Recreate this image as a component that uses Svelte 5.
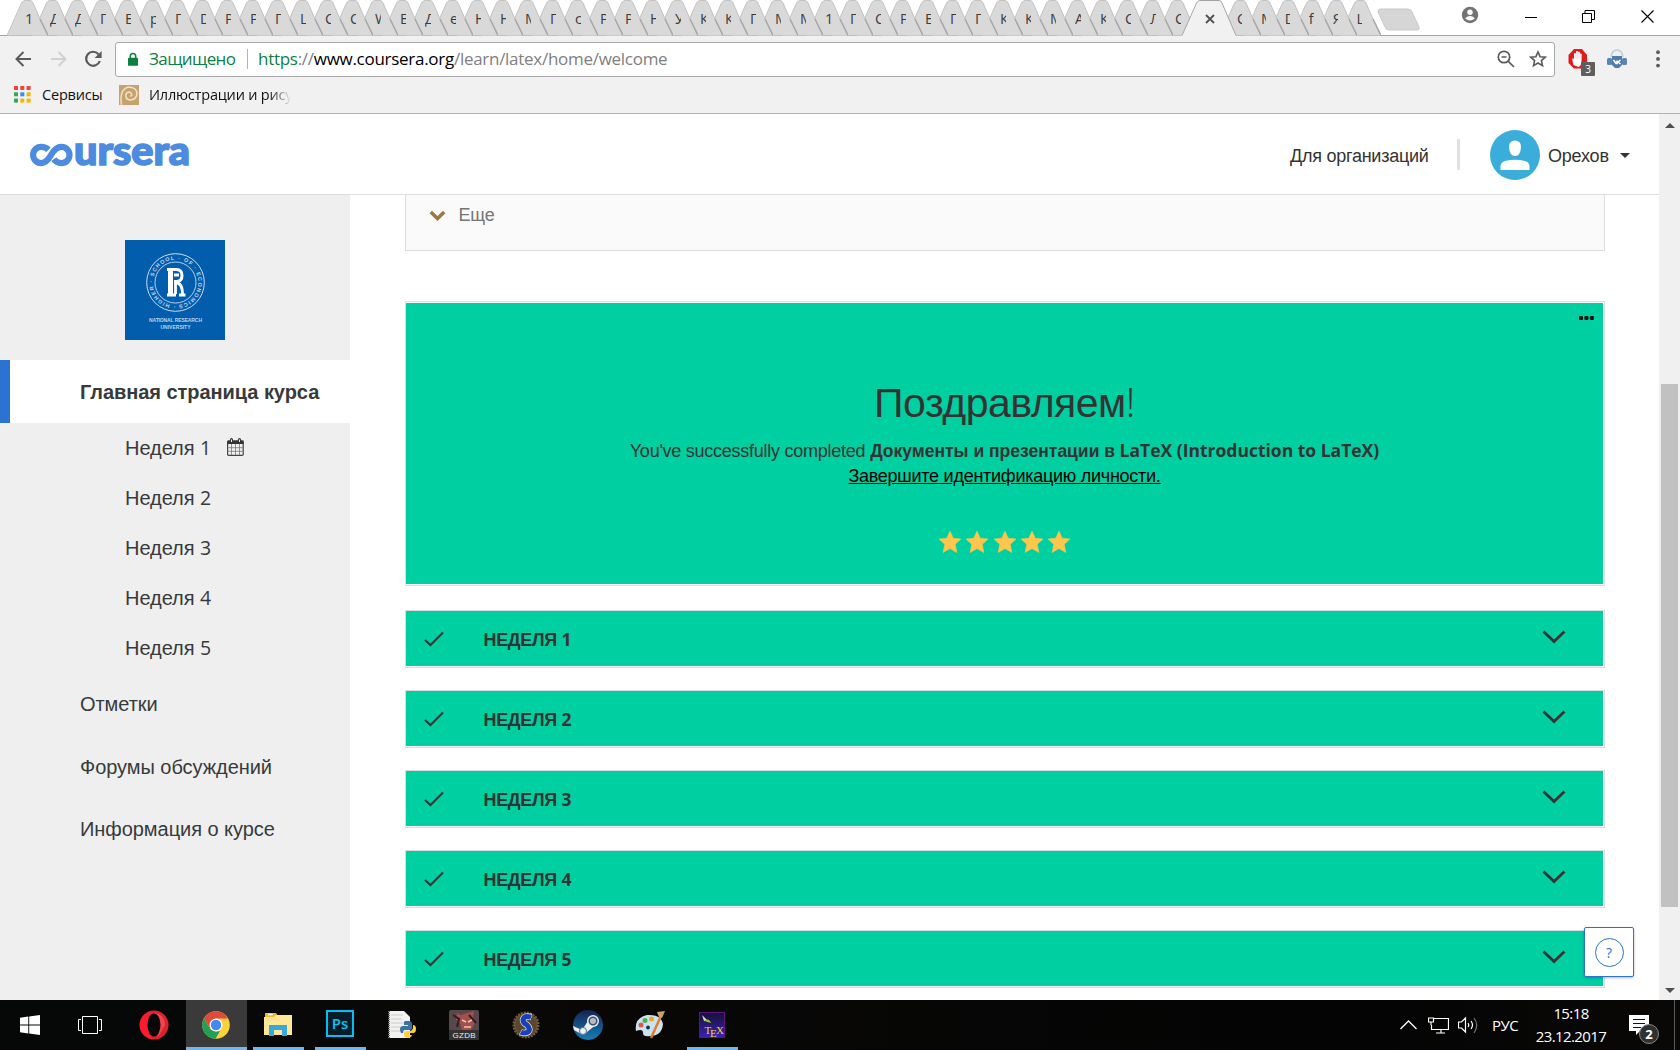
<script>
  const before = [...'1ДДГЕрГDРРГLССWЕДеННМГсРРНУККГММ1ГСРЕГГККМАКСЛС'];
  const after = [...'СМDfЯL'];
  const weeks = [1, 2, 3, 4, 5];
  const appColors = ['#f44336', '#f44336', '#f44336', '#34a853', '#2196f3', '#fbb300', '#34a853', '#fbb300', '#fbb300'];
</script>

{#snippet tab(letter, z, cls)}
  <div class="tab {cls}" style="z-index: {z}">
    <svg class="shape" width="41" height="36" viewBox="0 0 41 36">
      <path d="M0 35.5 L14.5 3 Q16 .5 18 .5 H23 Q25 .5 26 3 L41 35.5Z" fill="#d9d9d9" />
      <path d="M0 35.5 L14.5 3 Q16 .5 18 .5 H23 Q25 .5 26 3 L33 19" fill="none" stroke="#c3c3c3" />
      <path d="M33 19 L41 35.5" fill="none" stroke="#a5a5a5" stroke-width="1.5" />
    </svg>
    <span class="letter">{letter}</span>
  </div>
{/snippet}

<div class="screen">
  <div class="tabstrip">
    <div class="tabs">
      {#each before as l, i}{@render tab(l, 60 - i, 'wide')}{/each}
      <div class="active-tab">
        <svg width="55" height="37" viewBox="0 0 55 37">
          <path d="M0 37 L0 35.5 L14.5 3 Q16 .5 18 .5 H37 Q39 .5 40 3 L54 35.5 V37Z" fill="#f1f1f1" />
          <path d="M0 35.5 L14.5 3 Q16 .5 18 .5 H37 Q39 .5 40 3 L54 35.5" fill="none" stroke="#a5a5a5" />
          <path d="M24 15l8 8M32 15l-8 8" stroke="#505050" stroke-width="1.8" />
        </svg>
      </div>
      {#each after as l, i}{@render tab(l, 12 - i, 'narrow')}{/each}
    </div>
    <svg class="newtab" width="44" height="24" viewBox="0 0 44 24"><path d="M3 1H31Q34 1 35 4L42 19Q43 22 40 22H12Q9 22 8 19L1 4Q1 1 3 1Z" fill="#d6d6d6" stroke="#c9c9c9" /></svg>
    <div class="winctl">
      <svg width="18" height="18" viewBox="0 0 18 18"><circle cx="9" cy="9" r="8.2" fill="#737373" /><circle cx="9" cy="6.3" r="2.7" fill="#fff" /><path d="M4 12.2Q9 8 14 12.2Q9 17 4 12.2Z" fill="#fff" /></svg>
      <svg width="12" height="12" viewBox="0 0 12 12"><path d="M0 6.5H12" stroke="#000" /></svg>
      <svg width="13" height="13" viewBox="0 0 13 13" fill="none" stroke="#000"><path d="M.5 3.5H9.5V12.5H.5ZM3 3.5V.5H12.5V9.5H9.5" /></svg>
      <svg width="13" height="13" viewBox="0 0 13 13" stroke="#000" stroke-width="1.1"><path d="M.5 .5l12 12M12.5 .5l-12 12" /></svg>
    </div>
  </div>

  <div class="toolbar">
    <div class="nav">
      <svg width="17" height="16" viewBox="0 0 17 16" fill="none" stroke="#5a5a5a" stroke-width="2"><path d="M16 8H2M8.5 1L1.5 8L8.5 15" /></svg>
      <svg width="17" height="16" viewBox="0 0 17 16" fill="none" stroke="#d0d0d0" stroke-width="2"><path d="M1 8H15M8.5 1L15.5 8L8.5 15" /></svg>
      <svg width="18" height="18" viewBox="0 0 18 18"><path d="M14.5 4.2A7 7 0 1 0 15.8 11" fill="none" stroke="#5a5a5a" stroke-width="2.2" /><path d="M17.6 1V8H10.6Z" fill="#5a5a5a" /></svg>
    </div>
    <div class="omnibox">
      <svg class="lock" width="10" height="15" viewBox="0 0 11 15"><rect x="0" y="5.5" width="11" height="9" rx="1" fill="#0b8043" /><path d="M2.5 6V4a3 3 0 0 1 6 0V6" fill="none" stroke="#0b8043" stroke-width="1.7" /></svg>
      <span class="secure">Защищено</span>
      <span class="sep"></span>
      <span class="url"><b>https</b>://<i>www.coursera.org</i>/learn/latex/home/welcome</span>
      <svg class="mag" width="18" height="18" viewBox="0 0 18 18" fill="none" stroke="#5a5a5a" stroke-width="1.7"><circle cx="7" cy="7" r="5.7" /><path d="M4.5 7H9.5M11.3 11.3L17 17" /></svg>
      <svg width="18" height="18" viewBox="0 0 18 18" fill="none" stroke="#5a5a5a" stroke-width="1.6"><path d="M9 2L11.1 6.7L16.2 7.2L12.4 10.6L13.5 15.6L9 13L4.5 15.6L5.6 10.6L1.8 7.2L6.9 6.7Z" /></svg>
    </div>
    <div class="exts">
      <div class="adblock">
        <svg width="20" height="20" viewBox="0 0 20 20"><path d="M6 0H14L19 6V14L14 19.5H6L.5 14V6Z" fill="#e01b1b" /><path d="M5.5 16Q4 12 4.5 9L6 10V4.5Q7 3.5 8 4.5V2.5Q9 1.5 10 2.5V3Q11 2 12 3.5V5Q13 4 13.7 5.3L13.5 13Q13 17 10.5 18Z" fill="#fff" /><path d="M8 4V10M10 3V10M12 4V10" stroke="#dda6a6" stroke-width=".5" /></svg>
        <span class="count">3</span>
      </div>
      <svg width="20" height="20" viewBox="0 0 20 20"><path d="M4 8Q5 1 10 1T16 8" fill="none" stroke="#c3d3e4" stroke-width="1.8" /><rect x="0" y="9" width="5" height="7" rx="1.5" fill="#5b83b1" /><rect x="15" y="9" width="5" height="7" rx="1.5" fill="#5b83b1" /><path d="M5 7H15V16L12 19H8L5 16Z" fill="#4f7cad" /><path d="M6.500 11l2.500 3.500h1v-3M13.500 11l-2.500 2l2.500 2" fill="none" stroke="#fff" stroke-width="1.600" /></svg>
      <svg width="4" height="18" viewBox="0 0 4 18" fill="#5a5a5a"><circle cx="2" cy="2.2" r="1.9" /><circle cx="2" cy="8.9" r="1.9" /><circle cx="2" cy="15.6" r="1.9" /></svg>
    </div>
  </div>

  <div class="bookmarks">
    <svg width="17" height="17" viewBox="0 0 17 17">
      {#each appColors as c, i}<rect x={(i % 3) * 6.3} y={Math.floor(i / 3) * 6.3} width="4" height="4" fill={c} />{/each}
    </svg>
    <span class="services">Сервисы</span>
    <svg width="20" height="20" viewBox="0 0 20 20"><rect width="20" height="20" fill="#c6a26d" /><path d="M2.500 20Q0 5 9 2Q18 2 18 9Q17 15 11 15Q6 14 7 9Q9 6 12 8Q14 11 11 11" fill="none" stroke="#efdfc3" stroke-width="1.600" /></svg>
    <span class="illus">Иллюстрации и рису</span>
  </div>

  <div class="viewport">
    <div class="page">
      <header>
        <svg class="brand" width="160" height="26" viewBox="0 0 160 26">
          <path d="M18.500 7.800Q15.500 4.900 11.200 4.900A8.100 8.100 0 0 0 11.200 21.100Q16.500 21.100 21 13Q25.500 4.900 31.400 4.900A8.100 8.100 0 0 1 31.400 21.100Q26.500 21.100 23.800 17.300" fill="none" stroke="#4c8be0" stroke-width="6.200" />
          <text x="44" y="23.200" textLength="116" lengthAdjust="spacingAndGlyphs">ursera</text>
        </svg>
        <div class="hright">
          <span class="org">Для организаций</span>
          <span class="hsep"></span>
          <svg width="50" height="50" viewBox="0 0 50 50"><circle cx="25" cy="25" r="25" fill="#3badda" /><path d="M25 10.500Q31 10.500 31 17Q30.500 26 25 26T19 17Q19 10.500 25 10.500Z" fill="#fff" /><path d="M10.500 40V36Q11 32 15 31Q25 28.500 35 31Q39 32 39.500 36V40Z" fill="#fff" /></svg>
          <span class="user">Орехов</span>
          <svg width="10" height="5" viewBox="0 0 10 5"><path d="M0 0H10L5 5Z" fill="#333" /></svg>
        </div>
      </header>
      <div class="body">
        <aside>
          <svg class="hse" width="100" height="100" viewBox="0 0 100 100">
            <rect width="100" height="100" fill="#025ead" />
            <g fill="none" stroke="#c9dcf0"><circle cx="50.500" cy="42.500" r="28.800" /><circle cx="50.500" cy="42.500" r="20.500" stroke-width=".9" /></g>
            <path id="ring" d="M50.500 65.200A22.700 22.700 0 1 1 50.600 65.200" fill="none" />
            <text class="ringtext"><textPath href="#ring" textLength="139">· HIGHER · SCHOOL · OF · ECONOMICS</textPath></text>
            <g fill="none" stroke="#fff"><path d="M42 29.500H52Q57 30 57 35.500T52 41.500H49" stroke-width="3" /><path d="M45.500 29V56" stroke-width="5" /><path d="M42 55H51M54 55H60.500M49 35H54M50.500 54V42.500Q57.500 43 57.500 54" stroke-width="2.800" /></g>
            <g class="hsecap"><text x="50.500" y="82" textLength="53">NATIONAL RESEARCH</text><text x="50.500" y="88.500" textLength="30">UNIVERSITY</text></g>
          </svg>
          <div class="home">Главная страница курса</div>
          {#each weeks as w}
            <div class="wk"><span>Неделя <b>{w}</b></span>
              {#if w === 1}
                <svg width="17" height="18" viewBox="0 0 17 18"><rect x=".6" y="3" width="15.600" height="14.300" rx="1" fill="none" stroke="#444" stroke-width="1.200" /><path d="M.5 2.500H16.500V6H.5Z" fill="#333" /><path d="M.5 9.700H16.500M.5 13.300H16.500M4.500 6V17M8.500 6V17M12.500 6V17" stroke="#777" stroke-width=".8" /><path d="M4.500 1.500V4M12.500 1.500V4" stroke="#333" stroke-width="3" stroke-linecap="round" /><path d="M4.500 1.500V4M12.500 1.500V4" stroke="#efefef" stroke-width="1" /></svg>
              {/if}
            </div>
          {/each}
          <div class="link first">Отметки</div>
          <div class="link">Форумы обсуждений</div>
          <div class="link">Информация о курсе</div>
        </aside>
        <main>
          <section class="more">
            <svg width="17" height="11" viewBox="0 0 17 11"><path d="M1.800 2L8.500 8.500L15.200 2" fill="none" stroke="#9a783f" stroke-width="3.500" /></svg>
            <span>Еще</span>
          </section>
          <div class="frame congrats">
            <div class="green hero">
              <svg class="dots" width="15" height="4" viewBox="0 0 15 4" fill="#111"><rect width="4" height="4" rx="1" /><rect x="5.400" width="4" height="4" rx="1" /><rect x="10.800" width="4" height="4" rx="1" /></svg>
              <h1>Поздравляем<span class="bang">!</span></h1>
              <p><span class="done">You've successfully completed</span> <strong><span class="cyr">Документы и презентации в</span> LaTeX (Introduction to LaTeX)</strong></p>
              <a class="verify" href="#verify">Завершите идентификацию личности.</a>
              <div class="stars">
                {#each weeks as _}
                  <svg width="22" height="22" viewBox="0 0 22 22"><path d="M11 0L14.200 7.200L22 8L16.200 13.300L17.900 21.500L11 17.600L4.100 21.500L5.800 13.300L0 8L7.800 7.200Z" fill="#ffc64c" stroke="#ffc64c" stroke-width=".6" stroke-linejoin="round" /></svg>
                {/each}
              </div>
            </div>
          </div>
          {#each weeks as w}
            <div class="frame">
              <div class="green week">
                <svg width="20" height="16" viewBox="0 0 20 16"><path d="M1 9L6.500 14L19 1.500" fill="none" stroke="#333" stroke-width="2" /></svg>
                <span>НЕДЕЛЯ <b>{w}</b></span>
                <svg class="chev" width="24" height="14" viewBox="0 0 24 14"><path d="M1.500 1.500L12 11.500L22.500 1.500" fill="none" stroke="#333" stroke-width="2.800" /></svg>
              </div>
            </div>
          {/each}
        </main>
      </div>
    </div>
    <div class="scroll">
      <svg width="10" height="5" viewBox="0 0 10 5"><path d="M0 5H10L5 0Z" fill="#505050" /></svg>
      <div class="thumb"></div>
      <svg width="10" height="5" viewBox="0 0 10 5"><path d="M0 0H10L5 5Z" fill="#505050" /></svg>
    </div>
    <div class="help"><span>?</span></div>
  </div>

  <footer>
    <div class="cell c60"><svg width="20" height="20" viewBox="0 0 20 20" fill="#fff"><path d="M0 2.800L8.300 1.600V9.500H0ZM9.200 1.500L20 0V9.500H9.200ZM0 10.500H8.300V18.400L0 17.200ZM9.200 10.500H20V20L9.200 18.500Z" /></svg></div>
    <div class="cell c60"><svg width="24" height="18" viewBox="0 0 24 18" fill="none" stroke="#fff"><path d="M4.500 .5H19.500V17.500H4.500ZM3 3.500H.5V14.500H3M21 3.500H23.500V14.500H21" /></svg></div>
    <div class="cell opera"><svg width="30" height="30" viewBox="0 0 30 30"><defs><linearGradient id="op" x1="0" x2="1"><stop offset="0" stop-color="#ff1b2d" /><stop offset="1" stop-color="#d8232e" /></linearGradient></defs><circle cx="15" cy="15" r="14.500" fill="url(#op)" /><path d="M15 3C19 3 26 6 26 15T19 27" fill="#ff6565" opacity=".55" /><ellipse cx="15" cy="15" rx="6.500" ry="11.500" fill="#080808" /></svg></div>
    <div class="cell focus open"><svg width="28" height="28" viewBox="0 0 28 28"><circle cx="14" cy="14" r="13.800" fill="#fdd13c" /><path d="M2 7A13.800 13.800 0 0 1 26 7.500H14L8 18Z" fill="#df4a3c" /><path d="M2 7L8 18L14 20.500L18 20L13.500 27.800A13.800 13.800 0 0 1 2 7Z" fill="#21a05a" /><circle cx="14" cy="14" r="6.500" fill="#fff" /><circle cx="14" cy="14" r="5.200" fill="#4688f1" /></svg></div>
    <div class="cell open"><svg width="28" height="24" viewBox="0 0 28 24"><path d="M1 0H12L14 3H25V6H1Z" fill="#f3b91e" /><path d="M4 1.500H9" stroke="#fff" stroke-width="1.500" /><path d="M0 4H10L12 2H28V22H0Z" fill="#ffe795" /><path d="M5 23V12H23V23H18V17H10V23Z" fill="#35a8e0" /></svg></div>
    <div class="cell open"><span class="ps">Ps</span></div>
    <div class="cell"><svg width="28" height="28" viewBox="0 0 28 28"><path d="M1 0H16L22 6V27H1Z" fill="#f2f2f2" /><path d="M3 4H15M3 8H14M3 12H18M3 16H12M3 20H12" stroke="#ccc" /><path d="M1 0V27" stroke="#777" stroke-dasharray="1 1" stroke-width="2" /><path d="M17 10H21Q24 10 24 13V17Q24 19 21 19H17Q15 19 15 22H13Q12 20 12 18Q12 15 15 15H20V14H16V11Z" fill="#3873a5" /><path d="M25 14Q28 14 28 18T25 22H21V24H24Q23 27 20 27Q16 27 16 24V22Q16 20 19 20H22Q25 19 25 16Z" fill="#ffd03b" /></svg></div>
    <div class="cell"><svg width="30" height="30" viewBox="0 0 30 30"><rect width="30" height="30" rx="2" fill="#56484c" /><path d="M8 3L12 5L18 3L25 1L24 8L26 13L22 20H13L11 13L7 10Z" fill="#a0504f" /><path d="M4 5L10 9L8 17M20 5L27 13" stroke="#311d22" stroke-width="2" fill="none" /><path d="M13 10L17 12M19 12L23 10M15 17H22" stroke="#f8c4a0" stroke-width="1.700" /><rect y="20" width="30" height="10" fill="#333" /><text class="gz" x="15" y="28" textLength="23">GZDB</text></svg></div>
    <div class="cell"><svg width="30" height="30" viewBox="0 0 30 30"><circle cx="15" cy="15" r="12" fill="#5b472d" stroke="#725a38" stroke-width="3" stroke-dasharray="2 1" /><path d="M20.500 7Q13 5 12 10Q12 13 16 15Q20 19 17 22Q13 24 9.500 22" fill="none" stroke="#eee" stroke-width="6.500" /><path d="M20 7.200Q13 5 12 10Q12 13 16 15Q20 19 17 22Q13 24 10 22" fill="none" stroke="#1841b8" stroke-width="5.200" /></svg></div>
    <div class="cell"><svg width="30" height="30" viewBox="0 0 30 30"><defs><linearGradient id="st" x2="0" y2="1"><stop offset="0" stop-color="#142350" /><stop offset="1" stop-color="#147fb9" /></linearGradient></defs><circle cx="15" cy="15" r="15" fill="url(#st)" /><path d="M0 16L9 20L15 11L24 14L14 22L10 25L1 20Z" fill="#eee" /><circle cx="20" cy="11" r="6" fill="#eee" /><circle cx="20" cy="11" r="3.800" fill="#bbb" stroke="#35527c" stroke-width="1.500" /><circle cx="10" cy="21" r="3.500" fill="#eee" stroke="#526f92" /></svg></div>
    <div class="cell"><svg width="30" height="30" viewBox="0 0 30 30"><path d="M1 21Q-1 8 12 5Q26 4 28 14Q27 26 15 26Q8 27 8 23Q8 18 1 21Z" fill="#c9e3f0" /><circle cx="6" cy="15" r="2.500" fill="#df5649" /><circle cx="10" cy="10.500" r="2.500" fill="#51ae4c" /><circle cx="16.500" cy="9" r="2.500" fill="#f4a51c" /><circle cx="13" cy="17.500" r="1.900" fill="#122f4d" /><path d="M26 6L16 28" stroke="#df7c2a" stroke-width="2.400" /><path d="M22 2L30 1L27 8L24 7Z" fill="#c8a46b" /></svg></div>
    <div class="cell open"><svg width="26" height="26" viewBox="0 0 26 26"><defs><linearGradient id="tx" x2="0" y2="1"><stop offset="0" stop-color="#171034" /><stop offset="1" stop-color="#3b22b5" /></linearGradient></defs><rect x=".5" y=".5" width="25" height="25" fill="url(#tx)" stroke="#5c1580" /><path d="M3 3L8 8L5 9Z" fill="#ddd" /><path d="M5 9Q10 5 12 11Z" fill="#80cf24" /><g class="tex"><text x="5.500" y="21.500">T</text><text x="11" y="25">E</text><text x="17" y="21.500">X</text></g></svg></div>
    <div class="tray">
      <svg width="17" height="10" viewBox="0 0 17 10"><path d="M.5 9L8.500 1L16.500 9" fill="none" stroke="#fff" stroke-width="1.300" /></svg>
      <svg class="net" width="21" height="17" viewBox="0 0 21 17" fill="none" stroke="#fff"><path d="M6 1.500H20.500V12.500H3.500V8M13 12.500V16M8 16H17M.5 1H5.500V5H.5ZM3 5V8" stroke-width="1.200" /></svg>
      <svg class="vol" width="21" height="18" viewBox="0 0 21 18" fill="none" stroke="#fff" stroke-width="1.200"><path d="M.5 6H3.500L7.500 2V16L3.500 12H.5ZM10 7Q11.500 9 10 11M13 5Q16 9 13 13" /><path d="M16 2Q21.500 9 16 17" stroke="#777" /></svg>
      <span class="lang">РУС</span>
      <div class="clock"><span class="time">15:18</span><span class="date">23.12.2017</span></div>
      <div class="note">
        <svg width="20" height="20" viewBox="0 0 20 20"><path d="M0 0H20V16H11L7 20V16H0Z" fill="#fff" /><path d="M4 4.500H16M4 8.500H16M4 12.500H12" stroke="#111" /></svg>
        <span>2</span>
      </div>
      <span class="peek"></span>
    </div>
  </footer>
</div>

<style>
  :global(body) { margin: 0; overflow: hidden; }
  .screen { width: 1680px; height: 1050px; display: flex; flex-direction: column; overflow: hidden; background: #fff; color: #333; font-family: "Liberation Sans", Arial, sans-serif; }
  .screen * { box-sizing: border-box; }
  svg { display: block; flex: none; }
  .tabstrip { height: 36px; flex: none; display: flex; background: #fff; border-bottom: 1px solid #a5a5a5; }
  .tabs { display: flex; padding-left: 7px; isolation: isolate; }
  .tab { position: relative; width: 41px; height: 36px; flex: none; margin-right: -16px; }
  .tab.narrow { margin-right: -17.100px; }
  .shape { position: absolute; left: 0; top: 0; }
  .letter { position: absolute; left: 18px; top: 10px; width: 6px; height: 21px; overflow: hidden; white-space: nowrap; font: 14.500px/17px "Open Sans", sans-serif; color: #3c3c3c; }
  .narrow .letter { left: 17px; width: 5px; }
  .active-tab { position: relative; z-index: 100; width: 55px; height: 37px; margin-right: -17px; flex: none; }
  .newtab { margin: 8px 0 0 14px; }
  .winctl { display: flex; align-items: center; margin-left: 40px; height: 33px; }
  .winctl svg:nth-child(1) { margin-top: -3px; }
  .winctl svg:nth-child(2) { margin-left: 46px; }
  .winctl svg:nth-child(3) { margin-left: 45px; }
  .winctl svg:nth-child(4) { margin-left: 46px; }
  .toolbar { height: 45px; flex: none; display: flex; align-items: center; background: #f1f1f1; }
  .nav { width: 115px; display: flex; align-items: center; gap: 17.500px; padding-left: 15px; }
  .omnibox { width: 1440px; height: 35px; margin-top: 1px; display: flex; align-items: center; background: #fff; border: 1px solid #a9a9a9; border-radius: 3px; font: 17px/24px "Open Sans", sans-serif; padding: 0 7px 0 12px; }
  .secure { color: #0b8043; width: 87px; margin-left: 11px; letter-spacing: -.6px; white-space: nowrap; }
  .sep { width: 1px; height: 20px; background: #b3b3b3; margin: 0 10px 0 11px; }
  .url { color: #808080; white-space: nowrap; letter-spacing: -.28px; }
  .url b { font-weight: 400; color: #0b8043; }
  .url i { font-style: normal; color: #000; }
  .mag { margin-left: auto; margin-right: 14px; }
  .exts { display: flex; align-items: center; padding-left: 13px; }
  .exts > svg:last-child { margin-left: 29px; }
  .adblock { position: relative; width: 39px; height: 20px; }
  .count { position: absolute; left: 13px; top: 13px; width: 14px; height: 14px; background: #5e5e5e; border-radius: 1px; color: #fff; font: 10px/15px "Open Sans", sans-serif; text-align: center; }
  .bookmarks { height: 33px; flex: none; display: flex; align-items: center; padding: 0 0 5px 14px; background: #f1f1f1; border-bottom: 1px solid #b2b2b2; color: #111; font: 14.500px/20px "Open Sans", sans-serif; white-space: nowrap; }
  .services { width: 61px; margin: 0 16px 0 11px; letter-spacing: -.2px; }
  .illus { margin-left: 10px; width: 142px; overflow: hidden; letter-spacing: -.2px; mask-image: linear-gradient(90deg, #000 85%, transparent); }
  .viewport { position: relative; height: 886px; flex: none; display: flex; }
  .page { width: 1659px; display: flex; flex-direction: column; height: 886px; overflow: hidden; }
  header { height: 81px; flex: none; display: flex; justify-content: space-between; align-items: center; border-bottom: 1px solid #ddd; padding: 0 29px 0 30px; }
  .brand { overflow: visible; margin-top: 1px; }
  .brand text { font: 900 40px Lato, sans-serif; fill: #4c8be0; stroke: #4c8be0; stroke-width: 1.600px; }
  .hright { display: flex; align-items: center; font-size: 18px; padding-top: 2px; }
  .org { width: 138px; letter-spacing: -.25px; white-space: nowrap; padding-top: 2px; }
  .hsep { width: 3px; height: 31px; background: #e1e1e1; margin: -2px 30px 0 29px; }
  .user { margin: 2px 11px 0 8px; width: 61px; letter-spacing: -.2px; }
  .body { display: flex; height: 805px; }
  aside { width: 350px; background: #efefef; flex: none; font-size: 20px; letter-spacing: -.05px; color: #373a3c; }
  .hse { margin: 45px auto 20px; letter-spacing: 0; }
  .ringtext { font: 700 5.400px "Liberation Sans", sans-serif; fill: #c6daee; }
  .hsecap { font: 700 5px "Liberation Sans", sans-serif; fill: #b9d1ea; text-anchor: middle; }
  .home { height: 63px; line-height: 64px; background: #fff; border-left: 10px solid #2a73d2; padding-left: 70px; font-weight: 700; white-space: nowrap; }
  .wk { height: 50px; display: flex; align-items: center; gap: 16px; padding-left: 125px; line-height: 23px; }
  .wk b { font-family: "Open Sans", sans-serif; font-weight: 400; font-size: 19.500px; line-height: 20px; }
  .wk svg { margin-top: -3px; }
  .link { height: 62.500px; line-height: 62.500px; padding-left: 80px; }
  main { flex: 1; padding: 0 54px 0 55px; }
  .more { height: 56px; border: 1px solid #ddd; border-top: 0; background: #fafafa; display: flex; align-items: center; gap: 12.500px; padding: 0 0 15px 23px; font-size: 18px; color: #757575; }
  .more span { padding-top: 1px; letter-spacing: -.2px; }
  .frame { width: 1200px; height: 58px; border: 1px solid #ddd; margin-bottom: 22px; background: #fff; }
  .green { background: #00cfa1; width: 1197px; }
  .congrats { height: 285px; margin: 50px 0 24px; padding-top: 1px; }
  .hero { position: relative; height: 281px; text-align: center; padding-top: 72px; }
  .dots { position: absolute; right: 9px; top: 13px; }
  h1 { font: 400 41px/56px "Liberation Sans", sans-serif; margin: 0 0 7px; letter-spacing: -.5px; height: 56px; }
  .bang { font: 300 40px/40px "Open Sans", sans-serif; }
  p { margin: 0; font-size: 18px; line-height: 25px; height: 26px; white-space: nowrap; }
  .done { letter-spacing: -.26px; }
  p strong { font: 700 17.500px/25px "Open Sans", sans-serif; }
  .cyr { font-family: "Liberation Sans", sans-serif; letter-spacing: 0; }
  .verify { color: #000; font-size: 18px; line-height: 25px; letter-spacing: -.26px; display: block; text-decoration: underline; }
  .stars { display: flex; justify-content: center; gap: 5.200px; margin-top: 42px; }
  .week { height: 55px; display: flex; align-items: center; padding: 0 37px 0 18px; }
  .week span { margin: 2px 0 0 39.500px; font: 700 18px/24px "Liberation Sans", sans-serif; letter-spacing: -.35px; }
  .week b { font: 700 17.500px/20px "Open Sans", sans-serif; }
  .chev { margin-left: auto; margin-top: -4px; }
  .scroll { width: 21px; background: #f0f0f0; display: flex; flex-direction: column; align-items: center; padding: 9px 0 7px; }
  .thumb { width: 17px; height: 523px; margin: 256px 0 auto; background: #c1c1c1; }
  .help { position: absolute; left: 1584px; top: 813px; width: 50px; height: 50px; border: 1px solid #2a73d2; border-radius: 2px; background: #fff; display: grid; place-items: center; box-shadow: 0 1px 3px #0004; }
  .help span { width: 29px; height: 29px; border: 1px solid #2a73d2; border-radius: 50%; color: #2a73d2; font: 14px/27px "Open Sans", sans-serif; text-align: center; }
  footer { height: 50px; display: flex; background: linear-gradient(90deg, #050807, #090807 30%, #040404 80%, #090807); color: #fff; }
  .cell { width: 62px; height: 50px; display: flex; align-items: center; justify-content: center; flex: none; position: relative; }
  .c60 { width: 60px; }
  .opera { margin-left: 3px; }
  .cell.open::after { content: ""; position: absolute; bottom: 0; left: 6px; width: 51px; height: 3px; background: #76b4ea; }
  .cell.focus { background: #3b3a3a; width: 61px; margin-left: 1px; padding-right: 2px; }
  .cell.focus::after { left: 0; width: 61px; }
  .ps { width: 28px; height: 27px; margin-top: -4px; border: 2px solid #08bdf2; background: #061c27; color: #08c4f7; font: 600 15px/23px "Open Sans", sans-serif; text-align: center; }
  .gz { font: 8px "Liberation Sans", sans-serif; fill: #eee; text-anchor: middle; }
  .tex { font: 11px "Liberation Serif", serif; fill: #f1d514; }
  .tray { margin-left: auto; display: flex; align-items: center; height: 50px; padding-right: 5px; font: 15px/24px "Open Sans", sans-serif; }
  .net { margin-left: 11px; }
  .vol { margin-left: 9px; }
  .lang { margin-left: 13px; width: 27px; letter-spacing: -.5px; }
  .clock { width: 72px; margin-left: 16px; display: flex; flex-direction: column; align-items: center; line-height: 23px; letter-spacing: -.6px; white-space: nowrap; }
  .note { position: relative; width: 30px; height: 30px; margin: 10px 15px 0 22px; }
  .note span { position: absolute; left: 10px; top: 9px; width: 20px; height: 20px; border: 1px solid #888; border-radius: 50%; background: #303030; font: 700 13px/18px "Open Sans", sans-serif; text-align: center; }
  .peek { width: 1px; height: 50px; background: #5a5a5a; }
</style>
